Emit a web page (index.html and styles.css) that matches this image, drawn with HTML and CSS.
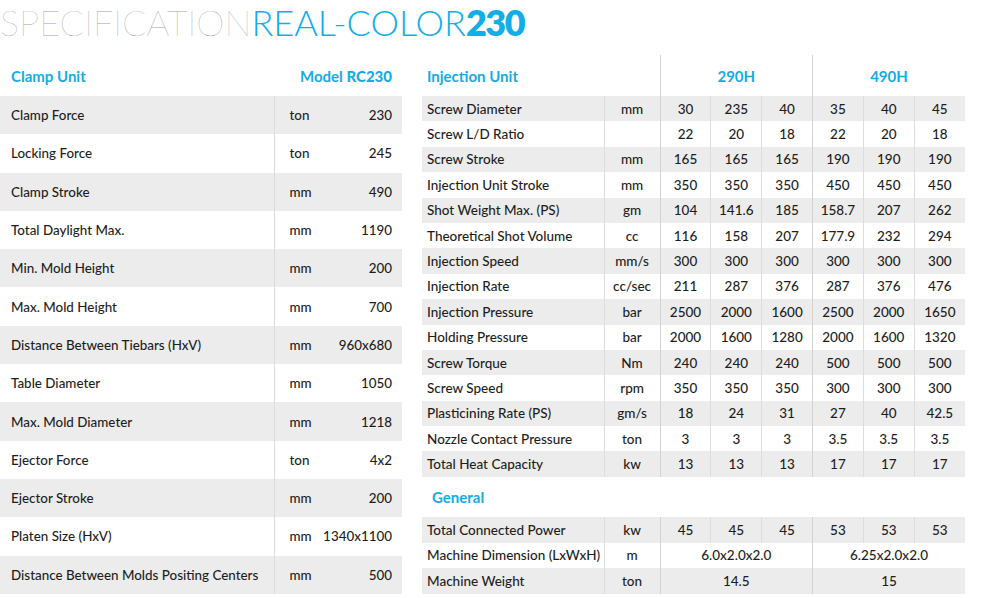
FILE: index.html
```html
<!DOCTYPE html>
<html>
<head>
<meta charset="utf-8">
<link rel="stylesheet" href="styles.css">
</head>
<body>
<h1 class="title"><span class="t-spec">SPECIFICATION</span><span class="t-real">REAL-COLOR</span><span class="t-num">230</span></h1>
<div class="main">
  <table class="clamp">
    <colgroup>
      <col class="cc-label"><col class="cc-unit"><col class="cc-val">
    </colgroup>
    <thead>
      <tr class="head"><th class="h-label">Clamp Unit</th><th class="h-model" colspan="2"><span class="m-word">Model</span> <span class="m-code">RC230</span></th></tr>
    </thead>
    <tbody>
      <tr><td class="c-label">Clamp Force</td><td class="c-unit">ton</td><td class="c-val">230</td></tr>
      <tr><td class="c-label">Locking Force</td><td class="c-unit">ton</td><td class="c-val">245</td></tr>
      <tr><td class="c-label">Clamp Stroke</td><td class="c-unit">mm</td><td class="c-val">490</td></tr>
      <tr><td class="c-label">Total Daylight Max.</td><td class="c-unit">mm</td><td class="c-val">1190</td></tr>
      <tr><td class="c-label">Min. Mold Height</td><td class="c-unit">mm</td><td class="c-val">200</td></tr>
      <tr><td class="c-label">Max. Mold Height</td><td class="c-unit">mm</td><td class="c-val">700</td></tr>
      <tr><td class="c-label">Distance Between Tiebars (HxV)</td><td class="c-unit">mm</td><td class="c-val">960x680</td></tr>
      <tr><td class="c-label">Table Diameter</td><td class="c-unit">mm</td><td class="c-val">1050</td></tr>
      <tr><td class="c-label">Max. Mold Diameter</td><td class="c-unit">mm</td><td class="c-val">1218</td></tr>
      <tr><td class="c-label">Ejector Force</td><td class="c-unit">ton</td><td class="c-val">4x2</td></tr>
      <tr><td class="c-label">Ejector Stroke</td><td class="c-unit">mm</td><td class="c-val">200</td></tr>
      <tr><td class="c-label">Platen Size (HxV)</td><td class="c-unit">mm</td><td class="c-val">1340x1100</td></tr>
      <tr><td class="c-label">Distance Between Molds Positing Centers</td><td class="c-unit">mm</td><td class="c-val">500</td></tr>
    </tbody>
  </table>

  <table class="inj">
    <colgroup>
      <col class="col-label"><col class="col-unit">
      <col class="col-v"><col class="col-v"><col class="col-v">
      <col class="col-v"><col class="col-v"><col class="col-v">
    </colgroup>
    <thead>
      <tr class="head"><th class="h-label" colspan="2">Injection Unit</th><th class="h-grp major" colspan="3">290H</th><th class="h-grp major" colspan="3">490H</th></tr>
    </thead>
    <tbody>
      <tr class="g"><td class="i-label">Screw Diameter</td><td class="i-unit">mm</td><td class="v major">30</td><td class="v">235</td><td class="v">40</td><td class="v major">35</td><td class="v">40</td><td class="v">45</td></tr>
      <tr><td class="i-label">Screw L/D Ratio</td><td class="i-unit"></td><td class="v major">22</td><td class="v">20</td><td class="v">18</td><td class="v major">22</td><td class="v">20</td><td class="v">18</td></tr>
      <tr class="g"><td class="i-label">Screw Stroke</td><td class="i-unit">mm</td><td class="v major">165</td><td class="v">165</td><td class="v">165</td><td class="v major">190</td><td class="v">190</td><td class="v">190</td></tr>
      <tr><td class="i-label">Injection Unit Stroke</td><td class="i-unit">mm</td><td class="v major">350</td><td class="v">350</td><td class="v">350</td><td class="v major">450</td><td class="v">450</td><td class="v">450</td></tr>
      <tr class="g"><td class="i-label">Shot Weight Max. (PS)</td><td class="i-unit">gm</td><td class="v major">104</td><td class="v">141.6</td><td class="v">185</td><td class="v major">158.7</td><td class="v">207</td><td class="v">262</td></tr>
      <tr><td class="i-label">Theoretical Shot Volume</td><td class="i-unit">cc</td><td class="v major">116</td><td class="v">158</td><td class="v">207</td><td class="v major">177.9</td><td class="v">232</td><td class="v">294</td></tr>
      <tr class="g"><td class="i-label">Injection Speed</td><td class="i-unit">mm/s</td><td class="v major">300</td><td class="v">300</td><td class="v">300</td><td class="v major">300</td><td class="v">300</td><td class="v">300</td></tr>
      <tr><td class="i-label">Injection Rate</td><td class="i-unit">cc/sec</td><td class="v major">211</td><td class="v">287</td><td class="v">376</td><td class="v major">287</td><td class="v">376</td><td class="v">476</td></tr>
      <tr class="g"><td class="i-label">Injection Pressure</td><td class="i-unit">bar</td><td class="v major">2500</td><td class="v">2000</td><td class="v">1600</td><td class="v major">2500</td><td class="v">2000</td><td class="v">1650</td></tr>
      <tr><td class="i-label">Holding Pressure</td><td class="i-unit">bar</td><td class="v major">2000</td><td class="v">1600</td><td class="v">1280</td><td class="v major">2000</td><td class="v">1600</td><td class="v">1320</td></tr>
      <tr class="g"><td class="i-label">Screw Torque</td><td class="i-unit">Nm</td><td class="v major">240</td><td class="v">240</td><td class="v">240</td><td class="v major">500</td><td class="v">500</td><td class="v">500</td></tr>
      <tr><td class="i-label">Screw Speed</td><td class="i-unit">rpm</td><td class="v major">350</td><td class="v">350</td><td class="v">350</td><td class="v major">300</td><td class="v">300</td><td class="v">300</td></tr>
      <tr class="g"><td class="i-label">Plasticining Rate (PS)</td><td class="i-unit">gm/s</td><td class="v major">18</td><td class="v">24</td><td class="v">31</td><td class="v major">27</td><td class="v">40</td><td class="v">42.5</td></tr>
      <tr><td class="i-label">Nozzle Contact Pressure</td><td class="i-unit">ton</td><td class="v major">3</td><td class="v">3</td><td class="v">3</td><td class="v major">3.5</td><td class="v">3.5</td><td class="v">3.5</td></tr>
      <tr class="g"><td class="i-label">Total Heat Capacity</td><td class="i-unit">kw</td><td class="v major">13</td><td class="v">13</td><td class="v">13</td><td class="v major">17</td><td class="v">17</td><td class="v">17</td></tr>
      <tr class="sect"><td class="s-label" colspan="8">General</td></tr>
      <tr class="g"><td class="i-label">Total Connected Power</td><td class="i-unit">kw</td><td class="v major">45</td><td class="v">45</td><td class="v">45</td><td class="v major">53</td><td class="v">53</td><td class="v">53</td></tr>
      <tr><td class="i-label">Machine Dimension (LxWxH)</td><td class="i-unit">m</td><td class="v major" colspan="3">6.0x2.0x2.0</td><td class="v major" colspan="3">6.25x2.0x2.0</td></tr>
      <tr class="g"><td class="i-label">Machine Weight</td><td class="i-unit">ton</td><td class="v major" colspan="3">14.5</td><td class="v major" colspan="3">15</td></tr>
    </tbody>
  </table>
</div>
</body>
</html>
```

FILE: styles.css
```css
html, body {
  margin: 0;
  padding: 0;
  background: #ffffff;
}
body {
  font-family: Lato, "Liberation Sans", sans-serif;
  font-weight: 500;
  color: #1e1e1e;
  width: 981px;
  height: 598px;
  overflow: hidden;
}
.title {
  margin: 0;
  height: 55px;
  padding-top: 2px;
  box-sizing: border-box;
  font-size: 36px;
  line-height: 40px;
  white-space: nowrap;
}
.t-spec {
  font-weight: 100;
  color: #a3a3a3;
}
.t-real {
  font-weight: 300;
  color: #12aee8;
}
.t-num {
  font-weight: 800;
  color: #12aee8;
  letter-spacing: -1.5px;
}
.main {
  display: flex;
  align-items: flex-start;
  gap: 20px;
}
table {
  border-collapse: collapse;
  border-spacing: 0;
}
.clamp {
  width: 402px;
  table-layout: fixed;
  font-size: 13.4px;
}
.cc-label { width: 274px; }
.cc-unit { width: 48px; }
.cc-val { width: 80px; }
.clamp td {
  white-space: nowrap;
}
.clamp .head th {
  height: 41px;
  padding: 0 11px;
  font-size: 15px;
  font-weight: 700;
  color: #14ace6;
  text-align: left;
  vertical-align: middle;
  white-space: nowrap;
}
.clamp .head .h-model {
  text-align: right;
  padding-right: 10px;
}
.m-word {
  font-weight: 700;
}
.m-code {
  font-weight: 900;
}
.clamp tbody tr {
  height: 38.3px;
}
.clamp tbody tr:nth-child(odd) {
  background: #ececec;
}
.c-label {
  padding: 0 0 0 11px;
}
.c-unit {
  border-left: 1px solid #dcdcdc;
  padding: 0 0 0 15px;
}
.c-val {
  text-align: right;
  padding: 0 10px 0 0;
}
.inj {
  width: 543px;
  table-layout: fixed;
  font-size: 13.5px;
}
.col-label { width: 182px; }
.col-unit { width: 56px; }
.col-v { width: 50.8px; }
.inj .head th {
  height: 41px;
  padding: 0;
  font-size: 15px;
  font-weight: 700;
  color: #14ace6;
  vertical-align: middle;
}
.inj .head .h-label {
  text-align: left;
  padding-left: 5px;
}
.inj .h-grp {
  text-align: center;
}
.inj tbody tr {
  height: 25.4px;
}
.inj tbody tr.g {
  background: #ececec;
}
.inj td {
  padding: 0;
  white-space: nowrap;
}
.i-label {
  padding-left: 5px !important;
}
.i-unit {
  text-align: center;
  border-left: 1px solid #dddddd;
}
.v {
  text-align: center;
  border-left: 1px solid #dddddd;
}
.inj .major {
  border-left: 1px solid #d2d2d2;
}
.inj tr.sect {
  height: 40.5px;
}
.s-label {
  padding-left: 10px !important;
  font-size: 15px;
  font-weight: 700;
  color: #14ace6;
  vertical-align: middle;
}
```
